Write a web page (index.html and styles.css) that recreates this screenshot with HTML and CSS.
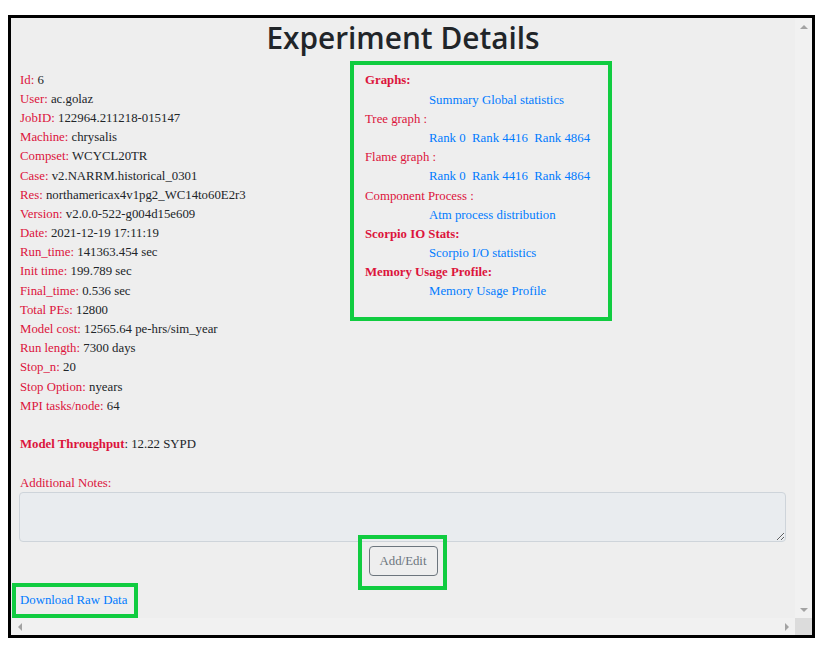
FILE: index.html
```html
<!DOCTYPE html>
<html>
<head>
<meta charset="utf-8">
<title>Experiment Details</title>
<link rel="stylesheet" href="styles.css">
</head>
<body>
<div class="frame">
  <div class="content">
    <h1 class="title">Experiment Details</h1>
    <div class="details">
      <div class="info">
        <div class="line"><span class="lbl">Id:</span> 6</div>
        <div class="line"><span class="lbl">User:</span> ac.golaz</div>
        <div class="line"><span class="lbl">JobID:</span> 122964.211218-015147</div>
        <div class="line"><span class="lbl">Machine:</span> chrysalis</div>
        <div class="line"><span class="lbl">Compset:</span> WCYCL20TR</div>
        <div class="line"><span class="lbl">Case:</span> v2.NARRM.historical_0301</div>
        <div class="line"><span class="lbl">Res:</span> northamericax4v1pg2_WC14to60E2r3</div>
        <div class="line"><span class="lbl">Version:</span> v2.0.0-522-g004d15e609</div>
        <div class="line"><span class="lbl">Date:</span> 2021-12-19 17:11:19</div>
        <div class="line"><span class="lbl">Run_time:</span> 141363.454 sec</div>
        <div class="line"><span class="lbl">Init time:</span> 199.789 sec</div>
        <div class="line"><span class="lbl">Final_time:</span> 0.536 sec</div>
        <div class="line"><span class="lbl">Total PEs:</span> 12800</div>
        <div class="line"><span class="lbl">Model cost:</span> 12565.64 pe-hrs/sim_year</div>
        <div class="line"><span class="lbl">Run length:</span> 7300 days</div>
        <div class="line"><span class="lbl">Stop_n:</span> 20</div>
        <div class="line"><span class="lbl">Stop Option:</span> nyears</div>
        <div class="line"><span class="lbl">MPI tasks/node:</span> 64</div>
        <div class="line gap"><b class="lbl">Model Throughput</b>: 12.22 SYPD</div>
      </div>
      <div class="graphs">
        <div class="line"><b class="lbl">Graphs:</b></div>
        <div class="line sub"><a href="#">Summary Global statistics</a></div>
        <div class="line"><span class="lbl">Tree graph :</span></div>
        <div class="line sub"><a href="#">Rank 0</a>&nbsp; <a href="#">Rank 4416</a>&nbsp; <a href="#">Rank 4864</a></div>
        <div class="line"><span class="lbl">Flame graph :</span></div>
        <div class="line sub"><a href="#">Rank 0</a>&nbsp; <a href="#">Rank 4416</a>&nbsp; <a href="#">Rank 4864</a></div>
        <div class="line"><span class="lbl">Component Process :</span></div>
        <div class="line sub"><a href="#">Atm process distribution</a></div>
        <div class="line"><b class="lbl">Scorpio IO Stats:</b></div>
        <div class="line sub"><a href="#">Scorpio I/O statistics</a></div>
        <div class="line"><b class="lbl">Memory Usage Profile:</b></div>
        <div class="line sub"><a href="#">Memory Usage Profile</a></div>
      </div>
    </div>
    <div class="notes">
      <div class="line lbl">Additional Notes:</div>
      <textarea class="note-box" disabled></textarea>
      <div class="actions"><button class="btn" type="button">Add/Edit</button></div>
      <div class="line"><a href="#">Download Raw Data</a></div>
    </div>
    <div class="mark mark-btn"></div>
    <div class="mark mark-dl"></div>
  </div>
  <div class="vbar">
    <span class="arr up"></span>
    <span class="arr down"></span>
  </div>
  <div class="hbar">
    <span class="arr left"></span>
    <span class="arr right"></span>
  </div>
  <div class="corner"></div>
</div>
</body>
</html>
```

FILE: styles.css
```css
html, body {
  margin: 0;
  padding: 0;
  background: #ffffff;
}

.frame {
  margin: 15px 0 0 8px;
  width: 807px;
  height: 623px;
  box-sizing: border-box;
  border: 3px solid #000000;
  display: grid;
  grid-template-columns: 784px 17px;
  grid-template-rows: 600px 17px;
  background: #eeeeee;
}

.content {
  position: relative;
  overflow: hidden;
  padding: 0 9px;
  font-family: "Liberation Serif", "Times New Roman", serif;
  font-size: 12.8px;
  line-height: 19.2px;
  color: #212529;
}

.title {
  margin: 0 0 3px;
  height: 40px;
  font-family: "Open Sans", "Noto Sans", sans-serif;
  font-weight: 600;
  font-size: 29.8px;
  line-height: 40px;
  text-align: center;
  color: #212529;
}

.details {
  display: flex;
  align-items: flex-start;
}

.info {
  flex: none;
  width: 330px;
  padding-top: 9.6px;
}

.line {
  height: 19.2px;
  white-space: nowrap;
}

.gap {
  margin-top: 19.2px;
}

.lbl {
  color: #dc143c;
}

b.lbl {
  font-weight: bold;
}

.graphs {
  flex: none;
  width: 262px;
  box-sizing: border-box;
  border: 4px solid #10cc40;
  padding: 6.4px 10px 15.8px 11px;
}

.sub {
  padding-left: 64px;
}

a {
  color: #007bff;
  text-decoration: none;
}

.notes {
  padding-top: 19.6px;
}

.note-box {
  display: block;
  box-sizing: border-box;
  width: 767px;
  height: 50px;
  margin: -1.6px 0 0 -1px;
  background: #e9ecef;
  border: 1px solid #ced4da;
  border-radius: 4px;
  resize: vertical;
}

.actions {
  display: flex;
  justify-content: center;
  padding-top: 4.5px;
  padding-bottom: 15px;
}

.btn {
  width: 69px;
  height: 30px;
  box-sizing: border-box;
  background: transparent;
  border: 1px solid #6c757d;
  border-radius: 4px;
  color: #6c757d;
  font-family: "Liberation Serif", "Times New Roman", serif;
  font-size: 12.8px;
  padding: 0;
}

.mark {
  position: absolute;
  box-sizing: border-box;
  border: 4px solid #10cc40;
}

.mark-btn {
  left: 347px;
  top: 517px;
  width: 89px;
  height: 55px;
}

.mark-dl {
  left: 1px;
  top: 565px;
  width: 126px;
  height: 35px;
}

.vbar {
  background: #f1f1f1;
  display: flex;
  flex-direction: column;
  justify-content: space-between;
  align-items: center;
  padding: 7px 0 6px;
}

.hbar {
  background: #f1f1f1;
  display: flex;
  justify-content: space-between;
  align-items: center;
  padding: 0 6px 0 7px;
}

.corner {
  background: #dcdcdc;
}

.arr {
  width: 0;
  height: 0;
  display: block;
}

.up {
  border-left: 4px solid transparent;
  border-right: 4px solid transparent;
  border-bottom: 4px solid #a3a3a3;
}

.down {
  border-left: 4px solid transparent;
  border-right: 4px solid transparent;
  border-top: 4px solid #a3a3a3;
}

.left {
  border-top: 4px solid transparent;
  border-bottom: 4px solid transparent;
  border-right: 4px solid #a3a3a3;
}

.right {
  border-top: 4px solid transparent;
  border-bottom: 4px solid transparent;
  border-left: 4px solid #a3a3a3;
}
```
